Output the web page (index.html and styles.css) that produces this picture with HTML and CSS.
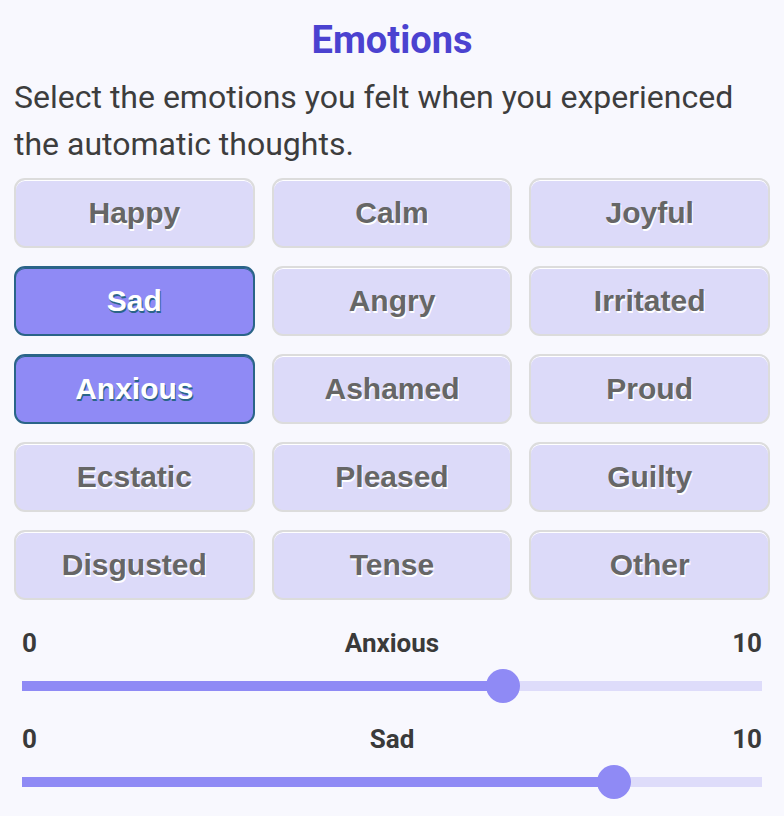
FILE: index.html
```html
<!DOCTYPE html>
<html lang="en">
<head>
<meta charset="utf-8">
<title>Emotions</title>
<link rel="stylesheet" href="styles.css">
</head>
<body>
<main class="page">
  <h1 class="title">Emotions</h1>
  <p class="intro">Select the emotions you felt when you experienced the automatic thoughts.</p>
  <div class="grid">
    <button class="chip">Happy</button>
    <button class="chip">Calm</button>
    <button class="chip">Joyful</button>
    <button class="chip selected">Sad</button>
    <button class="chip">Angry</button>
    <button class="chip">Irritated</button>
    <button class="chip selected">Anxious</button>
    <button class="chip">Ashamed</button>
    <button class="chip">Proud</button>
    <button class="chip">Ecstatic</button>
    <button class="chip">Pleased</button>
    <button class="chip">Guilty</button>
    <button class="chip">Disgusted</button>
    <button class="chip">Tense</button>
    <button class="chip">Other</button>
  </div>
  <section class="slider">
    <div class="labels"><span class="min">0</span><span class="name">Anxious</span><span class="max">10</span></div>
    <div class="rail">
      <div class="track"><div class="fill" style="width:65%"></div></div>
      <div class="thumb" style="left:65%"></div>
    </div>
  </section>
  <section class="slider">
    <div class="labels"><span class="min">0</span><span class="name">Sad</span><span class="max">10</span></div>
    <div class="rail">
      <div class="track"><div class="fill" style="width:80%"></div></div>
      <div class="thumb" style="left:80%"></div>
    </div>
  </section>
</main>
</body>
</html>
```

FILE: styles.css
```css
* { box-sizing: border-box; }
html, body {
  margin: 0;
  padding: 0;
  background: #f8f8fe;
}
body {
  font-family: Roboto, "Noto Sans", sans-serif;
  width: 784px;
  height: 816px;
  overflow: hidden;
}
.page {
  padding: 16px 14px 0 14px;
}
.title {
  margin: 0;
  text-align: center;
  font-size: 38px;
  line-height: 48px;
  font-weight: 700;
  color: #4b42d0;
}
.intro {
  margin: 10px 0 10px 0;
  font-size: 32px;
  line-height: 47px;
  color: #3d3d3d;
  font-weight: 400;
}
.grid {
  display: grid;
  grid-template-columns: repeat(3, 1fr);
  gap: 18px 17px;
}
.chip {
  height: 70px;
  margin: 0;
  padding: 0;
  border: 2px solid #dcdcdc;
  border-radius: 11px;
  background: #dcdaf9;
  font-family: "Liberation Sans", Arial, sans-serif;
  font-weight: 700;
  font-size: 30px;
  color: #666666;
  text-shadow: 1px 2px 0 #ffffff;
  box-shadow: inset 0 1px 0 #ffffff;
}
.chip.selected {
  background: #8f8af5;
  border-color: #2a6488;
  color: #ffffff;
  text-shadow: 1px 2px 0 #2a6488;
  box-shadow: inset 0 1px 0 #2a6488;
}
.slider {
  padding: 0 8px;
}
.slider:first-of-type {
  margin-top: 28px;
}
.slider + .slider {
  margin-top: 21px;
}
.labels {
  display: grid;
  grid-template-columns: 1fr auto 1fr;
  font-size: 26px;
  line-height: 30px;
  font-weight: 700;
  color: #3a3a3a;
}
.labels .max { text-align: right; }
.rail {
  position: relative;
  margin-top: 11px;
  height: 34px;
  display: flex;
  align-items: center;
}
.track {
  width: 100%;
  height: 10px;
  background: #dedcfa;
}
.fill {
  height: 100%;
  background: #8f8af5;
}
.thumb {
  position: absolute;
  top: 0;
  width: 34px;
  height: 34px;
  margin-left: -17px;
  border-radius: 50%;
  background: #8f8af5;
}
```
